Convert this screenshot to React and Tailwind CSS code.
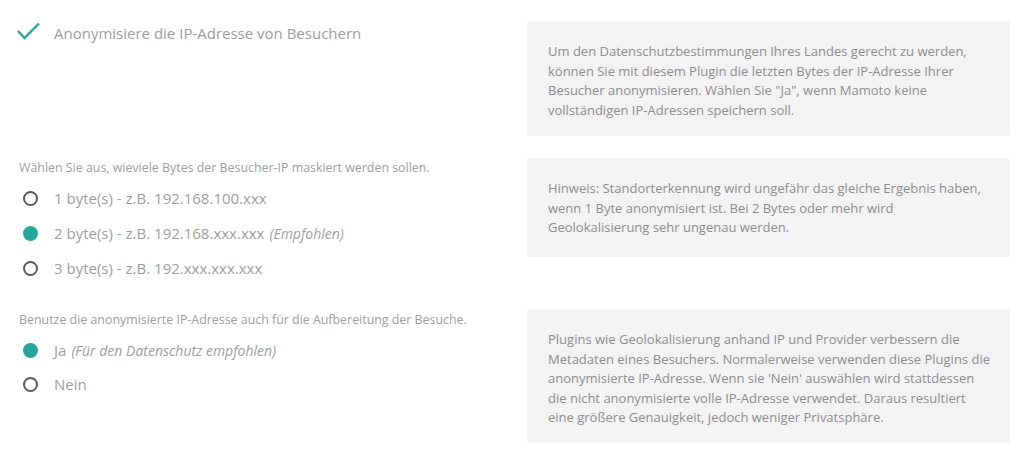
import React from "react";

const font = { fontFamily: '"Open Sans", "Noto Sans", sans-serif' };

function Radio({ checked }) {
  return checked ? (
    <span className="block h-[15px] w-[15px] rounded-full bg-[#26a69a]" />
  ) : (
    <span className="block h-[15px] w-[15px] rounded-full border-2 border-[#5a5a5a]" />
  );
}

function Option({ checked, label, hint, h = "h-[35px]" }) {
  return (
    <div className={`flex items-center ${h}`}>
      <div className="flex w-[37px] justify-start pl-[6px]">
        <Radio checked={checked} />
      </div>
      <span className="text-[15px] text-[#9e9e9e]">
        {label}
        {hint && <em className="ml-[5px] text-[14px] text-[#9e9e9e]">{hint}</em>}
      </span>
    </div>
  );
}

function HelpBox({ children, pb = "pb-[17px]" }) {
  return (
    <div className={`w-[483px] rounded-[3px] bg-[#f3f3f3] pl-[21px] pr-[17px] pt-[21px] ${pb} text-[13px] leading-[19.5px] text-[#8d8d8d]`}>
      {children}
    </div>
  );
}

export default function App() {
  const bytes = [
    { label: "1 byte(s) - z.B. 192.168.100.xxx" },
    { label: "2 byte(s) - z.B. 192.168.xxx.xxx", hint: "(Empfohlen)", checked: true },
    { label: "3 byte(s) - z.B. 192.xxx.xxx.xxx" },
  ];

  return (
    <div className="min-h-[459px] w-[1021px] bg-white pt-[21px] pl-[17px]" style={font}>
      <div className="flex items-start">
        <div className="w-[510px]">
          <div className="flex h-[24px] items-center">
            <svg width="37" height="24" viewBox="0 0 37 24" className="shrink-0">
              <polyline points="1,10 7.5,17 22,2.5" fill="none" stroke="#26a69a" strokeWidth="2.4" />
            </svg>
            <span className="text-[15px] text-[#9e9e9e]">Anonymisiere die IP-Adresse von Besuchern</span>
          </div>
        </div>
        <HelpBox pb="pb-[16px]">
          Um den Datenschutzbestimmungen Ihres Landes gerecht zu werden, können Sie mit diesem Plugin die letzten Bytes der IP-Adresse Ihrer Besucher anonymisieren. Wählen Sie "Ja", wenn Mamoto keine vollständigen IP-Adressen speichern soll.
        </HelpBox>
      </div>

      <div className="mt-[22px] flex items-start">
        <div className="w-[510px] pt-px">
          <div className="pl-[2px] text-[12.4px] leading-[18px] text-[#9e9e9e]">
            Wählen Sie aus, wieviele Bytes der Besucher-IP maskiert werden sollen.
          </div>
          <div className="mt-[4px]">
            {bytes.map((b) => (
              <Option key={b.label} {...b} />
            ))}
          </div>
        </div>
        <HelpBox pb="pb-[19px]">
          Hinweis: Standorterkennung wird ungefähr das gleiche Ergebnis haben, wenn 1 Byte anonymisiert ist. Bei 2 Bytes oder mehr wird Geolokalisierung sehr ungenau werden.
        </HelpBox>
      </div>

      <div className="mt-[23px] flex items-start">
        <div className="w-[510px] pt-[2px]">
          <div className="pl-[2px] text-[12.4px] leading-[18px] text-[#9e9e9e]">
            Benutze die anonymisierte IP-Adresse auch für die Aufbereitung der Besuche.
          </div>
          <div className="mt-[4px]">
            <Option checked label="Ja" hint="(Für den Datenschutz empfohlen)" h="h-[34px]" />
            <Option label="Nein" h="h-[34px]" />
          </div>
        </div>
        <HelpBox pb="pb-[15px]">
          Plugins wie Geolokalisierung anhand IP und Provider verbessern die Metadaten eines Besuchers. Normalerweise verwenden diese Plugins die anonymisierte IP-Adresse. Wenn sie 'Nein' auswählen wird stattdessen die nicht anonymisierte volle IP-Adresse verwendet. Daraus resultiert eine größere Genauigkeit, jedoch weniger Privatsphäre.
        </HelpBox>
      </div>
    </div>
  );
}
